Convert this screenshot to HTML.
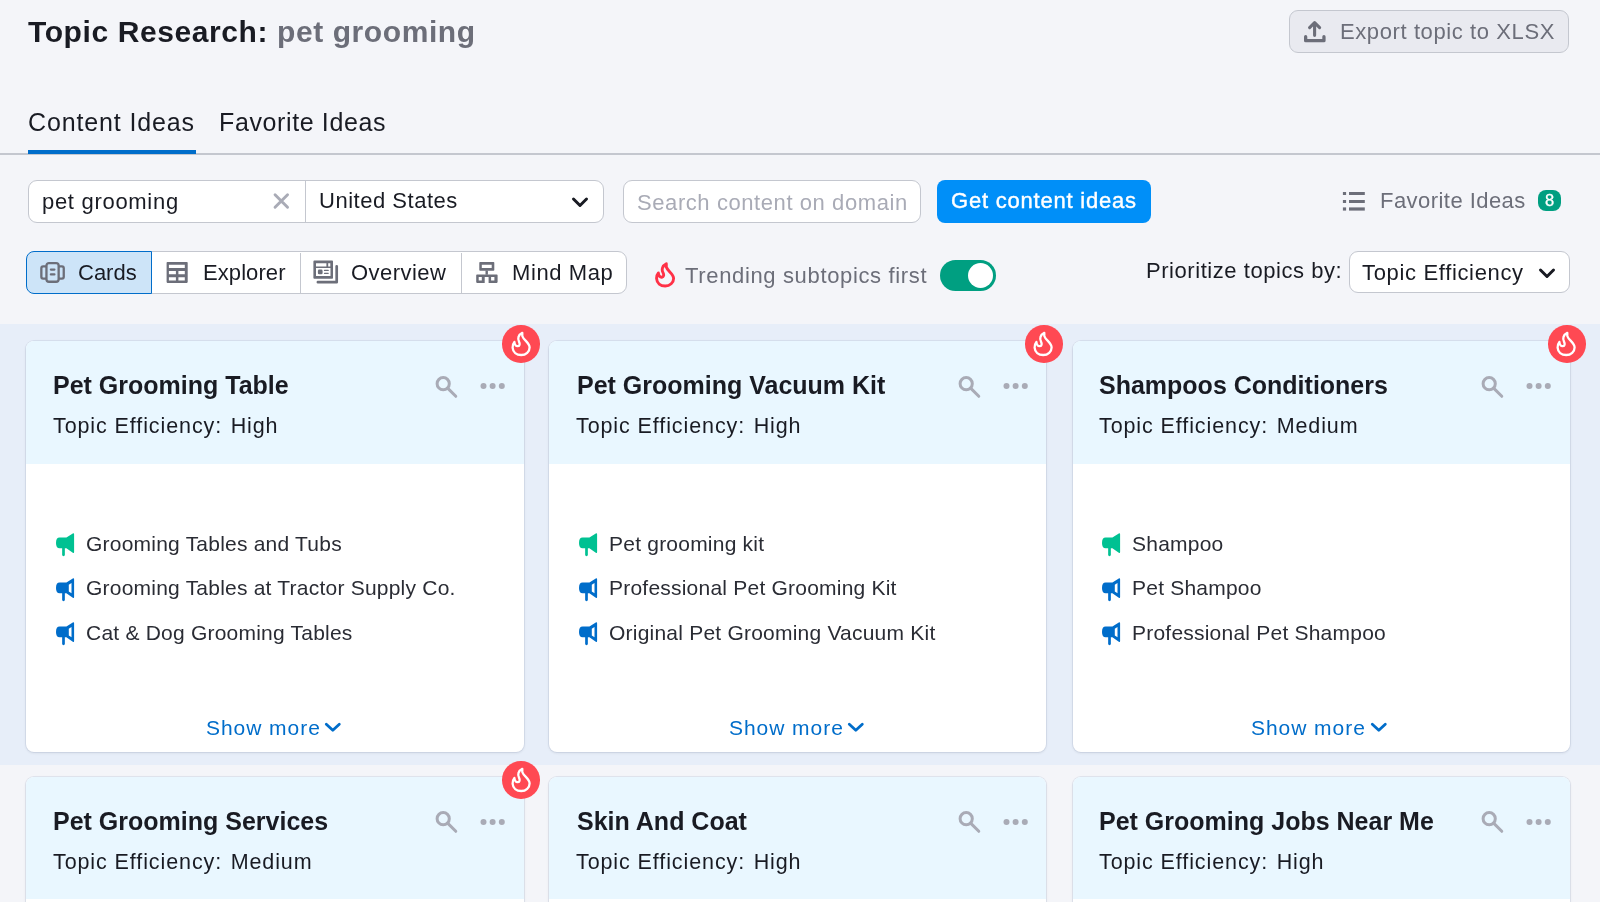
<!DOCTYPE html>
<html><head><meta charset="utf-8">
<style>
*{box-sizing:border-box;margin:0;padding:0}
html,body{width:1600px;height:902px;overflow:hidden;background:#f4f5f9;font-family:"Liberation Sans",sans-serif;color:#191b23;-webkit-font-smoothing:antialiased}
.a{position:absolute;white-space:pre;will-change:transform}
.t22{font-size:22px;line-height:22px}
.gray{color:#6c6e79}
.box{position:absolute;background:#fff;border:1.5px solid #c4c7cf;border-radius:9px}
.card{position:absolute;background:#fff;border-radius:8px;box-shadow:0 0 0 1px rgba(160,175,200,0.22),0 1px 3px rgba(25,27,35,0.10);overflow:hidden}
.card .hd{position:absolute;left:0;top:0;right:0;height:122.3px;background:#e9f7ff}
.ttl{font-size:25px;line-height:25px;font-weight:700;color:#191b23}
.sub{font-size:21.5px;line-height:21.5px;letter-spacing:0.9px;color:#191b23}
.li{font-size:21px;line-height:21px;letter-spacing:0.22px;color:#2a2c34}
.more{font-size:21px;line-height:21px;letter-spacing:0.95px;color:#006dca}
</style></head><body>

<!-- Title -->
<div class="a" style="left:28px;top:16.8px;font-size:30px;line-height:30px;font-weight:700;letter-spacing:0.59px">Topic Research: <span style="color:#6c6e79">pet grooming</span></div>

<!-- Export button -->
<div class="a" style="left:1288.5px;top:10px;width:280px;height:43px;background:#e9eaf0;border:1.5px solid #c4c7cf;border-radius:9px"></div>
<svg class="a" style="left:1300px;top:18px" width="30" height="28" viewBox="0 0 30 28">
 <path d="M5.65 18.65 V22.65 H23.95 V18.65" fill="none" stroke="#6c6e79" stroke-width="3.3" stroke-linecap="round" stroke-linejoin="round"/>
 <path d="M14.6 17.35 V5 M9.6 9.6 L14.6 4.6 L19.6 9.6" fill="none" stroke="#6c6e79" stroke-width="3.1" stroke-linecap="round" stroke-linejoin="round"/>
</svg>
<div class="a t22 gray" style="left:1340px;top:21px;letter-spacing:0.6px">Export topic to XLSX</div>

<!-- Tabs -->
<div class="a" style="left:28px;top:110.3px;font-size:25px;line-height:25px;letter-spacing:0.86px">Content Ideas</div>
<div class="a" style="left:219.3px;top:110.3px;font-size:25px;line-height:25px;letter-spacing:0.62px">Favorite Ideas</div>
<div class="a" style="left:0;top:152.6px;width:1600px;height:1.6px;background:#c4c7cf"></div>
<div class="a" style="left:27.6px;top:150px;width:167.5px;height:4.2px;background:#006dca"></div>

<!-- Row 1 inputs -->
<div class="box" style="left:28px;top:180px;width:575.5px;height:42.5px"></div>
<div class="a" style="left:304.7px;top:181px;width:1.3px;height:40.5px;background:#c4c7cf"></div>
<div class="a t22" style="left:42px;top:190.6px;letter-spacing:0.7px">pet grooming</div>
<svg class="a" style="left:272px;top:192px" width="19" height="19" viewBox="0 0 19 19"><path d="M3.05 2.75 L15.55 15.25 M15.55 2.75 L3.05 15.25" stroke="#a9abb6" stroke-width="2.9" stroke-linecap="round"/></svg>
<div class="a t22" style="left:318.9px;top:190px;letter-spacing:0.52px">United States</div>
<svg class="a" style="left:570px;top:195px" width="20" height="14" viewBox="0 0 20 14"><path d="M3.5 4 L10 10.5 L16.5 4" fill="none" stroke="#191b23" stroke-width="3" stroke-linecap="round" stroke-linejoin="round"/></svg>

<div class="box" style="left:622.5px;top:180px;width:298.5px;height:42.5px"></div>
<div class="a t22" style="left:636.5px;top:191.8px;letter-spacing:0.58px;color:#a9abb6">Search content on domain</div>

<div class="a" style="left:936.6px;top:179.7px;width:213.6px;height:43.3px;background:#008ff8;border-radius:8px"></div>
<div class="a t22" style="left:951px;top:189.6px;color:#fff;-webkit-text-stroke:0.4px #fff;letter-spacing:0.78px">Get content ideas</div>

<svg class="a" style="left:1340px;top:190px" width="28" height="24" viewBox="0 0 28 24">
 <rect x="2.9" y="2" width="3.2" height="3" fill="#6c6e79"/><rect x="9" y="2" width="15.8" height="3" fill="#6c6e79"/>
 <rect x="2.9" y="10" width="3.2" height="3" fill="#6c6e79"/><rect x="9" y="10" width="15.8" height="3" fill="#6c6e79"/>
 <rect x="2.9" y="17.4" width="3.2" height="3.2" fill="#6c6e79"/><rect x="9" y="17.4" width="15.8" height="3.2" fill="#6c6e79"/>
</svg>
<div class="a t22 gray" style="left:1379.5px;top:190.4px;letter-spacing:0.45px">Favorite Ideas</div>
<div class="a" style="left:1538.2px;top:190.4px;width:23px;height:21.4px;background:#009f81;border-radius:8px;color:#fff;font-size:16.5px;line-height:21.4px;text-align:center;-webkit-text-stroke:0.3px #fff">8</div>

<!-- Row 2: view switch -->
<div class="box" style="left:26.5px;top:251.3px;width:600.5px;height:43px"></div>
<div class="a" style="left:26.1px;top:251.1px;width:125.6px;height:43px;background:#cde4f8;border:1.5px solid #006dca;border-radius:8px 0 0 8px"></div>
<div class="a" style="left:300px;top:252.5px;width:1px;height:40.5px;background:#c4c7cf"></div>
<div class="a" style="left:461px;top:252.5px;width:1px;height:40.5px;background:#c4c7cf"></div>

<svg class="a" style="left:40px;top:262px" width="25" height="22" viewBox="0 0 25 22">
 <rect x="1.35" y="4.45" width="6" height="12.2" rx="1.8" fill="none" stroke="#6c6e79" stroke-width="2.3"/>
 <rect x="17.75" y="4.45" width="6" height="12.2" rx="1.8" fill="none" stroke="#6c6e79" stroke-width="2.3"/>
 <rect x="6.45" y="1.15" width="12.2" height="18.6" rx="2.5" fill="#cde4f8" stroke="#6c6e79" stroke-width="2.3"/>
 <path d="M10.9 7.55 H14.4 M10.9 12.4 H14.4" stroke="#6c6e79" stroke-width="2.3" stroke-linecap="round"/>
</svg>
<div class="a t22" style="left:78px;top:262.4px;letter-spacing:0px">Cards</div>

<svg class="a" style="left:166px;top:262px" width="22" height="22" viewBox="0 0 22 22">
 <path fill="#6c6e79" fill-rule="evenodd" d="M1.4 0 H20.9 Q21.7 0 21.7 0.8 V20.1 Q21.7 20.9 20.9 20.9 H1.4 Q0.6 20.9 0.6 20.1 V0.8 Q0.6 0 1.4 0 Z M2.9 2.7 V6 H18.8 V2.7 Z M2.9 8.9 V12.2 H9.9 V8.9 Z M12.4 8.9 V12.2 H18.8 V8.9 Z M2.9 15.3 V18.6 H9.9 V15.3 Z M12.4 15.3 V18.6 H18.8 V15.3 Z"/>
</svg>
<div class="a t22" style="left:203px;top:262.4px;letter-spacing:0.08px">Explorer</div>

<svg class="a" style="left:313px;top:260px" width="26" height="25" viewBox="0 0 26 25">
 <path fill="#6c6e79" fill-rule="evenodd" d="M1.4 0.6 H19.2 Q20 0.6 20 1.4 V17.9 Q20 18.7 19.2 18.7 H1.4 Q0.4 18.7 0.4 17.9 V1.4 Q0.4 0.6 1.4 0.6 Z M3 3.3 V6.6 H13.4 V3.3 Z M15.2 3.3 V6.6 H17.3 V3.3 Z M3 8 V16 H17.5 V8 Z"/>
 <rect x="4.9" y="9.6" width="4.7" height="4.6" rx="1.3" fill="#6c6e79"/>
 <path d="M11.5 10.4 H15.2 M11.5 13.3 H15.2" stroke="#6c6e79" stroke-width="1.3" stroke-linecap="round"/>
 <path d="M23.7 6.3 V22.2 H4.9" fill="none" stroke="#6c6e79" stroke-width="2.7" stroke-linecap="round" stroke-linejoin="round"/>
</svg>
<div class="a t22" style="left:351px;top:262.4px;letter-spacing:0.45px">Overview</div>

<svg class="a" style="left:475px;top:261px" width="24" height="24" viewBox="0 0 24 24">
 <path fill="#6c6e79" fill-rule="evenodd" d="M5.1 1 H18.5 Q19.3 1 19.3 1.8 V8.9 Q19.3 9.7 18.5 9.7 H5.1 Q4.3 9.7 4.3 8.9 V1.8 Q4.3 1 5.1 1 Z M6.8 3.7 V7 H16.7 V3.7 Z"/>
 <rect x="10.5" y="9.5" width="2.4" height="4.2" fill="#6c6e79"/>
 <path fill="#6c6e79" fill-rule="evenodd" d="M2 13.4 H21.8 Q22.6 13.4 22.6 14.2 V21.1 Q22.6 21.9 21.8 21.9 H13.6 V16.1 H9.7 V21.9 H2 Q1.2 21.9 1.2 21.1 V14.2 Q1.2 13.4 2 13.4 Z M3.7 16.1 V19.6 H6.8 V16.1 Z M16.1 16.1 V19.6 H19.4 V16.1 Z"/>
</svg>
<div class="a t22" style="left:512px;top:262.4px;letter-spacing:0.6px">Mind Map</div>

<!-- Trending -->
<svg class="a" style="left:655px;top:262px" width="21" height="26" viewBox="0 0 21 26">
 <path d="M11.3 1.8 C7.2 3.8 6.4 7.6 8 10.6 C9.2 12.8 8.7 15 6.9 15.2 C5 15.4 3.6 13.9 3.4 11 C1.8 13 1.5 15 1.6 16.6 C1.9 21.3 5.5 24 10.2 24 C15 24 18.6 20.6 18.6 16.5 C18.6 11.5 12.6 9.4 11.3 5 Z" fill="none" stroke="#ff3147" stroke-width="2.9" stroke-linejoin="round"/>
</svg>
<div class="a t22 gray" style="left:684.7px;top:265px;letter-spacing:0.65px">Trending subtopics first</div>
<div class="a" style="left:939.7px;top:259.9px;width:56.2px;height:31.2px;background:#009f81;border-radius:16px"></div>
<div class="a" style="left:967.7px;top:263px;width:25.2px;height:25.2px;background:#fff;border-radius:50%"></div>

<div class="a t22" style="left:1146px;top:260.2px;letter-spacing:0.55px">Prioritize topics by:</div>
<div class="box" style="left:1348.5px;top:251.2px;width:221.3px;height:42.3px"></div>
<div class="a t22" style="left:1362px;top:262.3px;letter-spacing:0.66px">Topic Efficiency</div>
<svg class="a" style="left:1537px;top:266px" width="20" height="14" viewBox="0 0 20 14"><path d="M3.5 4 L10 10.5 L16.5 4" fill="none" stroke="#191b23" stroke-width="3" stroke-linecap="round" stroke-linejoin="round"/></svg>

<!-- highlighted area -->
<div class="a" style="left:0;top:323.6px;width:1600px;height:440.5px;background:#e7eef9"></div>

<div class="card" style="left:26.0px;top:341.3px;width:498.0px;height:411px"><div class="hd"></div></div>
<div class="a ttl" style="left:53.4px;top:373.4px">Pet Grooming Table</div>
<div class="a sub" style="left:52.9px;top:415.9px">Topic Efficiency:<span style="letter-spacing:2.6px"> </span>High</div>
<svg class="a" style="left:435.2px;top:374.8px" width="24" height="24" viewBox="0 0 24 24"><circle cx="8.2" cy="8.7" r="6.1" fill="none" stroke="#a9abb6" stroke-width="3"/><path d="M12.6 13.1 L20.8 21.3" stroke="#a9abb6" stroke-width="3" stroke-linecap="round"/></svg>
<svg class="a" style="left:480.2px;top:381.3px" width="26" height="10" viewBox="0 0 26 10"><circle cx="3.5" cy="4.95" r="3" fill="#a9abb6"/><circle cx="12.6" cy="4.95" r="3" fill="#a9abb6"/><circle cx="21.8" cy="4.95" r="3" fill="#a9abb6"/></svg>
<div class="a" style="left:502.4px;top:325.3px;width:37.6px;height:37.6px;border-radius:50%;background:#ff4953"></div>
<svg class="a" style="left:510.7px;top:331.1px" width="21" height="26" viewBox="0 0 21 26"><path d="M11.3 1.8 C7.2 3.8 6.4 7.6 8 10.6 C9.2 12.8 8.7 15 6.9 15.2 C5 15.4 3.6 13.9 3.4 11 C1.8 13 1.5 15 1.6 16.6 C1.9 21.3 5.5 24 10.2 24 C15 24 18.6 20.6 18.6 16.5 C18.6 11.5 12.6 9.4 11.3 5 Z" fill="none" stroke="#fff" stroke-width="2.3" stroke-linejoin="round"/></svg>
<svg class="a" style="left:55.8px;top:533.3px" width="19" height="24" viewBox="0 0 19 24"><path d="M3.6 4.5 H10.4 L16.8 0.4 Q18.1 -0.2 18.1 1.2 V19 Q18.1 20.4 16.8 19.7 L10.4 15.3 H3.6 Q0 15.3 0 9.9 Q0 4.5 3.6 4.5 Z" fill="#00c192"/><path d="M7.5 15 V21.8" stroke="#00c192" stroke-width="2.7" stroke-linecap="round"/></svg>
<div class="a li" style="left:85.7px;top:532.7px">Grooming Tables and Tubs</div>
<svg class="a" style="left:55.8px;top:577.8px" width="19" height="24" viewBox="0 0 19 24"><path d="M3.6 4.5 H10.4 L16.8 0.4 Q18.1 -0.2 18.1 1.2 V19 Q18.1 20.4 16.8 19.7 L10.4 15.3 H3.6 Q0 15.3 0 9.9 Q0 4.5 3.6 4.5 Z" fill="#006dca"/><path d="M7.5 15 V21.8" stroke="#006dca" stroke-width="2.7" stroke-linecap="round"/><path d="M12.8 6.7 L15.5 5 V15.3 L12.8 13.4 Z" fill="#fff"/></svg>
<div class="a li" style="left:85.7px;top:577.2px">Grooming Tables at Tractor Supply Co.</div>
<svg class="a" style="left:55.8px;top:622.3px" width="19" height="24" viewBox="0 0 19 24"><path d="M3.6 4.5 H10.4 L16.8 0.4 Q18.1 -0.2 18.1 1.2 V19 Q18.1 20.4 16.8 19.7 L10.4 15.3 H3.6 Q0 15.3 0 9.9 Q0 4.5 3.6 4.5 Z" fill="#006dca"/><path d="M7.5 15 V21.8" stroke="#006dca" stroke-width="2.7" stroke-linecap="round"/><path d="M12.8 6.7 L15.5 5 V15.3 L12.8 13.4 Z" fill="#fff"/></svg>
<div class="a li" style="left:85.7px;top:621.7px">Cat &amp; Dog Grooming Tables</div>
<div class="a more" style="left:205.5px;top:716.9px">Show more</div>
<svg class="a" style="left:322.7px;top:720.3px" width="20" height="14" viewBox="0 0 20 14"><path d="M3.3 4.3 L9.8 10.3 L16.3 4.3" fill="none" stroke="#006dca" stroke-width="2.8" stroke-linecap="round" stroke-linejoin="round"/></svg>
<div class="card" style="left:549.3px;top:341.3px;width:497.0px;height:411px"><div class="hd"></div></div>
<div class="a ttl" style="left:576.7px;top:373.4px">Pet Grooming Vacuum Kit</div>
<div class="a sub" style="left:576.2px;top:415.9px">Topic Efficiency:<span style="letter-spacing:2.6px"> </span>High</div>
<svg class="a" style="left:957.6px;top:374.8px" width="24" height="24" viewBox="0 0 24 24"><circle cx="8.2" cy="8.7" r="6.1" fill="none" stroke="#a9abb6" stroke-width="3"/><path d="M12.6 13.1 L20.8 21.3" stroke="#a9abb6" stroke-width="3" stroke-linecap="round"/></svg>
<svg class="a" style="left:1002.6px;top:381.3px" width="26" height="10" viewBox="0 0 26 10"><circle cx="3.5" cy="4.95" r="3" fill="#a9abb6"/><circle cx="12.6" cy="4.95" r="3" fill="#a9abb6"/><circle cx="21.8" cy="4.95" r="3" fill="#a9abb6"/></svg>
<div class="a" style="left:1025.1px;top:325.3px;width:37.6px;height:37.6px;border-radius:50%;background:#ff4953"></div>
<svg class="a" style="left:1033.4px;top:331.1px" width="21" height="26" viewBox="0 0 21 26"><path d="M11.3 1.8 C7.2 3.8 6.4 7.6 8 10.6 C9.2 12.8 8.7 15 6.9 15.2 C5 15.4 3.6 13.9 3.4 11 C1.8 13 1.5 15 1.6 16.6 C1.9 21.3 5.5 24 10.2 24 C15 24 18.6 20.6 18.6 16.5 C18.6 11.5 12.6 9.4 11.3 5 Z" fill="none" stroke="#fff" stroke-width="2.3" stroke-linejoin="round"/></svg>
<svg class="a" style="left:579.1px;top:533.3px" width="19" height="24" viewBox="0 0 19 24"><path d="M3.6 4.5 H10.4 L16.8 0.4 Q18.1 -0.2 18.1 1.2 V19 Q18.1 20.4 16.8 19.7 L10.4 15.3 H3.6 Q0 15.3 0 9.9 Q0 4.5 3.6 4.5 Z" fill="#00c192"/><path d="M7.5 15 V21.8" stroke="#00c192" stroke-width="2.7" stroke-linecap="round"/></svg>
<div class="a li" style="left:609.0px;top:532.7px">Pet grooming kit</div>
<svg class="a" style="left:579.1px;top:577.8px" width="19" height="24" viewBox="0 0 19 24"><path d="M3.6 4.5 H10.4 L16.8 0.4 Q18.1 -0.2 18.1 1.2 V19 Q18.1 20.4 16.8 19.7 L10.4 15.3 H3.6 Q0 15.3 0 9.9 Q0 4.5 3.6 4.5 Z" fill="#006dca"/><path d="M7.5 15 V21.8" stroke="#006dca" stroke-width="2.7" stroke-linecap="round"/><path d="M12.8 6.7 L15.5 5 V15.3 L12.8 13.4 Z" fill="#fff"/></svg>
<div class="a li" style="left:609.0px;top:577.2px">Professional Pet Grooming Kit</div>
<svg class="a" style="left:579.1px;top:622.3px" width="19" height="24" viewBox="0 0 19 24"><path d="M3.6 4.5 H10.4 L16.8 0.4 Q18.1 -0.2 18.1 1.2 V19 Q18.1 20.4 16.8 19.7 L10.4 15.3 H3.6 Q0 15.3 0 9.9 Q0 4.5 3.6 4.5 Z" fill="#006dca"/><path d="M7.5 15 V21.8" stroke="#006dca" stroke-width="2.7" stroke-linecap="round"/><path d="M12.8 6.7 L15.5 5 V15.3 L12.8 13.4 Z" fill="#fff"/></svg>
<div class="a li" style="left:609.0px;top:621.7px">Original Pet Grooming Vacuum Kit</div>
<div class="a more" style="left:728.8px;top:716.9px">Show more</div>
<svg class="a" style="left:846.0px;top:720.3px" width="20" height="14" viewBox="0 0 20 14"><path d="M3.3 4.3 L9.8 10.3 L16.3 4.3" fill="none" stroke="#006dca" stroke-width="2.8" stroke-linecap="round" stroke-linejoin="round"/></svg>
<div class="card" style="left:1072.8px;top:341.3px;width:497.0px;height:411px"><div class="hd"></div></div>
<div class="a ttl" style="left:1099.3px;top:373.4px">Shampoos Conditioners</div>
<div class="a sub" style="left:1098.8px;top:415.9px">Topic Efficiency:<span style="letter-spacing:2.6px"> </span>Medium</div>
<svg class="a" style="left:1480.9px;top:374.8px" width="24" height="24" viewBox="0 0 24 24"><circle cx="8.2" cy="8.7" r="6.1" fill="none" stroke="#a9abb6" stroke-width="3"/><path d="M12.6 13.1 L20.8 21.3" stroke="#a9abb6" stroke-width="3" stroke-linecap="round"/></svg>
<svg class="a" style="left:1525.9px;top:381.3px" width="26" height="10" viewBox="0 0 26 10"><circle cx="3.5" cy="4.95" r="3" fill="#a9abb6"/><circle cx="12.6" cy="4.95" r="3" fill="#a9abb6"/><circle cx="21.8" cy="4.95" r="3" fill="#a9abb6"/></svg>
<div class="a" style="left:1548.1px;top:325.3px;width:37.6px;height:37.6px;border-radius:50%;background:#ff4953"></div>
<svg class="a" style="left:1556.4px;top:331.1px" width="21" height="26" viewBox="0 0 21 26"><path d="M11.3 1.8 C7.2 3.8 6.4 7.6 8 10.6 C9.2 12.8 8.7 15 6.9 15.2 C5 15.4 3.6 13.9 3.4 11 C1.8 13 1.5 15 1.6 16.6 C1.9 21.3 5.5 24 10.2 24 C15 24 18.6 20.6 18.6 16.5 C18.6 11.5 12.6 9.4 11.3 5 Z" fill="none" stroke="#fff" stroke-width="2.3" stroke-linejoin="round"/></svg>
<svg class="a" style="left:1102.3999999999999px;top:533.3px" width="19" height="24" viewBox="0 0 19 24"><path d="M3.6 4.5 H10.4 L16.8 0.4 Q18.1 -0.2 18.1 1.2 V19 Q18.1 20.4 16.8 19.7 L10.4 15.3 H3.6 Q0 15.3 0 9.9 Q0 4.5 3.6 4.5 Z" fill="#00c192"/><path d="M7.5 15 V21.8" stroke="#00c192" stroke-width="2.7" stroke-linecap="round"/></svg>
<div class="a li" style="left:1131.5px;top:532.7px">Shampoo</div>
<svg class="a" style="left:1102.3999999999999px;top:577.8px" width="19" height="24" viewBox="0 0 19 24"><path d="M3.6 4.5 H10.4 L16.8 0.4 Q18.1 -0.2 18.1 1.2 V19 Q18.1 20.4 16.8 19.7 L10.4 15.3 H3.6 Q0 15.3 0 9.9 Q0 4.5 3.6 4.5 Z" fill="#006dca"/><path d="M7.5 15 V21.8" stroke="#006dca" stroke-width="2.7" stroke-linecap="round"/><path d="M12.8 6.7 L15.5 5 V15.3 L12.8 13.4 Z" fill="#fff"/></svg>
<div class="a li" style="left:1131.5px;top:577.2px">Pet Shampoo</div>
<svg class="a" style="left:1102.3999999999999px;top:622.3px" width="19" height="24" viewBox="0 0 19 24"><path d="M3.6 4.5 H10.4 L16.8 0.4 Q18.1 -0.2 18.1 1.2 V19 Q18.1 20.4 16.8 19.7 L10.4 15.3 H3.6 Q0 15.3 0 9.9 Q0 4.5 3.6 4.5 Z" fill="#006dca"/><path d="M7.5 15 V21.8" stroke="#006dca" stroke-width="2.7" stroke-linecap="round"/><path d="M12.8 6.7 L15.5 5 V15.3 L12.8 13.4 Z" fill="#fff"/></svg>
<div class="a li" style="left:1131.5px;top:621.7px">Professional Pet Shampoo</div>
<div class="a more" style="left:1251.3px;top:716.9px">Show more</div>
<svg class="a" style="left:1368.5px;top:720.3px" width="20" height="14" viewBox="0 0 20 14"><path d="M3.3 4.3 L9.8 10.3 L16.3 4.3" fill="none" stroke="#006dca" stroke-width="2.8" stroke-linecap="round" stroke-linejoin="round"/></svg>
<div class="card" style="left:26.0px;top:776.9px;width:498.0px;height:200px"><div class="hd"></div></div>
<div class="a ttl" style="left:53.4px;top:809.0px">Pet Grooming Services</div>
<div class="a sub" style="left:52.9px;top:851.5px">Topic Efficiency:<span style="letter-spacing:2.6px"> </span>Medium</div>
<svg class="a" style="left:435.2px;top:810.4px" width="24" height="24" viewBox="0 0 24 24"><circle cx="8.2" cy="8.7" r="6.1" fill="none" stroke="#a9abb6" stroke-width="3"/><path d="M12.6 13.1 L20.8 21.3" stroke="#a9abb6" stroke-width="3" stroke-linecap="round"/></svg>
<svg class="a" style="left:480.2px;top:816.9px" width="26" height="10" viewBox="0 0 26 10"><circle cx="3.5" cy="4.95" r="3" fill="#a9abb6"/><circle cx="12.6" cy="4.95" r="3" fill="#a9abb6"/><circle cx="21.8" cy="4.95" r="3" fill="#a9abb6"/></svg>
<div class="a" style="left:502.4px;top:760.9px;width:37.6px;height:37.6px;border-radius:50%;background:#ff4953"></div>
<svg class="a" style="left:510.7px;top:766.7px" width="21" height="26" viewBox="0 0 21 26"><path d="M11.3 1.8 C7.2 3.8 6.4 7.6 8 10.6 C9.2 12.8 8.7 15 6.9 15.2 C5 15.4 3.6 13.9 3.4 11 C1.8 13 1.5 15 1.6 16.6 C1.9 21.3 5.5 24 10.2 24 C15 24 18.6 20.6 18.6 16.5 C18.6 11.5 12.6 9.4 11.3 5 Z" fill="none" stroke="#fff" stroke-width="2.3" stroke-linejoin="round"/></svg>
<div class="card" style="left:549.3px;top:776.9px;width:497.0px;height:200px"><div class="hd"></div></div>
<div class="a ttl" style="left:576.7px;top:809.0px">Skin And Coat</div>
<div class="a sub" style="left:576.2px;top:851.5px">Topic Efficiency:<span style="letter-spacing:2.6px"> </span>High</div>
<svg class="a" style="left:957.6px;top:810.4px" width="24" height="24" viewBox="0 0 24 24"><circle cx="8.2" cy="8.7" r="6.1" fill="none" stroke="#a9abb6" stroke-width="3"/><path d="M12.6 13.1 L20.8 21.3" stroke="#a9abb6" stroke-width="3" stroke-linecap="round"/></svg>
<svg class="a" style="left:1002.6px;top:816.9px" width="26" height="10" viewBox="0 0 26 10"><circle cx="3.5" cy="4.95" r="3" fill="#a9abb6"/><circle cx="12.6" cy="4.95" r="3" fill="#a9abb6"/><circle cx="21.8" cy="4.95" r="3" fill="#a9abb6"/></svg>
<div class="card" style="left:1072.8px;top:776.9px;width:497.0px;height:200px"><div class="hd"></div></div>
<div class="a ttl" style="left:1099.3px;top:809.0px">Pet Grooming Jobs Near Me</div>
<div class="a sub" style="left:1098.8px;top:851.5px">Topic Efficiency:<span style="letter-spacing:2.6px"> </span>High</div>
<svg class="a" style="left:1480.9px;top:810.4px" width="24" height="24" viewBox="0 0 24 24"><circle cx="8.2" cy="8.7" r="6.1" fill="none" stroke="#a9abb6" stroke-width="3"/><path d="M12.6 13.1 L20.8 21.3" stroke="#a9abb6" stroke-width="3" stroke-linecap="round"/></svg>
<svg class="a" style="left:1525.9px;top:816.9px" width="26" height="10" viewBox="0 0 26 10"><circle cx="3.5" cy="4.95" r="3" fill="#a9abb6"/><circle cx="12.6" cy="4.95" r="3" fill="#a9abb6"/><circle cx="21.8" cy="4.95" r="3" fill="#a9abb6"/></svg>
</body></html>
